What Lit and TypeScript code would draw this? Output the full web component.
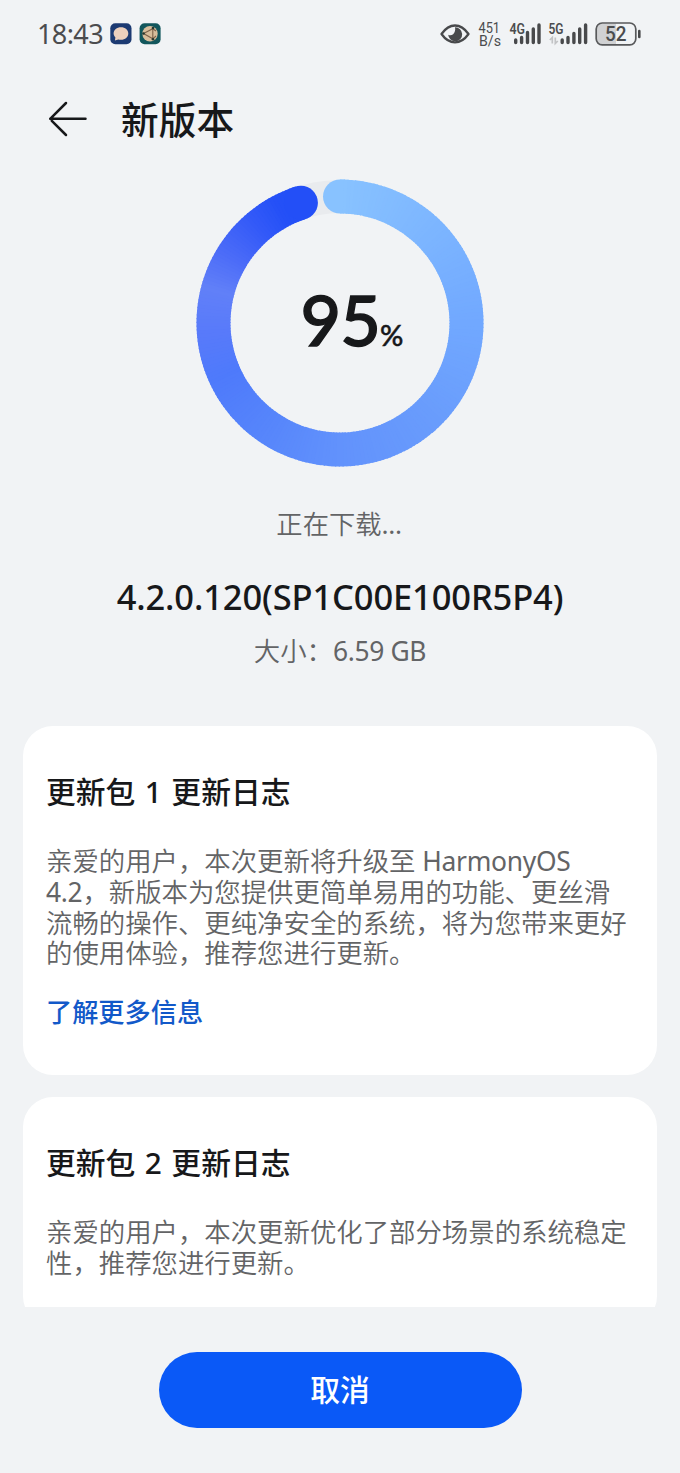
import { LitElement, html, svg, css } from "lit";
import { customElement, property } from "lit/decorators.js";

type Stop = [number, number, number, number];

const STOPS: Stop[] = [
  [0, 136, 194, 255],
  [45, 124, 181, 255],
  [90, 113, 168, 255],
  [135, 105, 156, 252],
  [180, 98, 146, 252],
  [215, 86, 133, 251],
  [245, 78, 122, 251],
  [265, 88, 122, 250],
  [284, 97, 128, 248],
  [300, 76, 108, 248],
  [318, 52, 90, 248],
  [332, 36, 80, 247],
  [360, 34, 78, 247],
];

function colorAt(deg: number): string {
  let i = 1;
  while (i < STOPS.length - 1 && STOPS[i][0] < deg) i++;
  const a = STOPS[i - 1];
  const b = STOPS[i];
  const t = Math.max(0, Math.min(1, (deg - a[0]) / (b[0] - a[0])));
  const mix = (k: number) => Math.round(a[k] + (b[k] - a[k]) * t);
  return `rgb(${mix(1)},${mix(2)},${mix(3)})`;
}

@customElement("progress-ring")
export class ProgressRing extends LitElement {
  @property({ type: Number }) value = 0;

  static styles = css`
    :host { display: grid; width: 288px; height: 288px; }
    svg, .label { grid-area: 1 / 1; }
    .label {
      display: flex; align-items: baseline; justify-content: center;
      padding: 102px 0 0 24px; color: #17181a; line-height: 76px;
      white-space: nowrap;
    }
    .num { font: 500 70px/76px "Lato", "Noto Sans", sans-serif; letter-spacing: -.8px; -webkit-text-stroke: 1.4px #17181a; }
    .pct { font: 500 29px/30px "Lato", "Noto Sans", sans-serif; -webkit-text-stroke: .5px #17181a; }
  `;

  private point(deg: number): string {
    const a = (deg * Math.PI) / 180;
    return `${(144 + 126.5 * Math.sin(a)).toFixed(3)} ${(144 - 126.5 * Math.cos(a)).toFixed(3)}`;
  }

  render() {
    const end = this.value * 3.6;
    const parts = [];
    for (let d = 0; d < end; d += 1.5) {
      const to = Math.min(d + 2, end);
      parts.push(svg`<path d="M${this.point(d)}A126.5 126.5 0 0 1 ${this.point(to)}" stroke=${colorAt(d)} stroke-width="34" fill="none"/>`);
    }
    const [ex, ey] = this.point(end).split(" ");
    return html`
      <svg width="288" height="288" viewBox="0 0 288 288">
        <circle cx="144" cy="144" r="126.5" fill="none" stroke="#e9ebee" stroke-width="33"/>
        <circle cx="144" cy="17.5" r="17" fill=${colorAt(0)}/>
        ${parts}
        <circle cx=${ex} cy=${ey} r="17" fill=${colorAt(end)}/>
      </svg>
      <div class="label"><span class="num">${this.value}</span><span class="pct">%</span></div>
    `;
  }
}

@customElement("status-bar")
export class StatusBar extends LitElement {
  static styles = css`
    :host { display: flex; height: 68px; box-sizing: border-box; padding: 0 38px 0 37px;
      align-items: center; justify-content: space-between; color: #4b4c4e; }
    .left, .right { display: flex; align-items: center; }
    .time { font: 400 27px/34px "Noto Sans", sans-serif; letter-spacing: -.6px; width: 73px; white-space: nowrap; }
    .app { margin-right: 7px; }
    svg { display: block; }
    text { font-family: "Roboto", sans-serif; fill: #4b4c4e; }
  `;

  render() {
    return html`
      <div class="left">
        <span class="time">18:43</span>
        <svg class="app" width="22" height="22" viewBox="0 0 22 22">
          <rect x=".3" y=".3" width="21.2" height="21" rx="5" fill="#1c3a72"/>
          <path d="M11 4.2c4.200 0 7.300 2.700 7.300 6.300s-3.100 6.300-7.300 6.300c-1 0-1.900-.1-2.700-.4l-3.400 1.200.5-3.200C4.300 13.300 3.600 12 3.600 10.500c0-3.600 3.200-6.300 7.400-6.300z" fill="#ecd0bd"/>
        </svg>
        <svg class="app" width="22" height="22" viewBox="0 0 22 22">
          <rect x=".6" y=".3" width="21" height="21" rx="5" fill="#12565c"/>
          <circle cx="11" cy="10.700" r="7.700" fill="#d8bd9b"/>
          <path d="M4.500 10.500L13.800 5.700V15.800L4.500 10.500M13.800 5.700L17 8M13.800 15.800L17 13" fill="none" stroke="#7d6149" stroke-width="1.100"/>
          <circle cx="4.500" cy="10.500" r="1.300" fill="#26372f"/><circle cx="14" cy="5" r="1.300" fill="#26372f"/><circle cx="14" cy="16.200" r="1.300" fill="#26372f"/>
        </svg>
      </div>
      <svg class="right" width="202" height="34" viewBox="0 0 202 34">
        <path d="M1.500 17C5.500 11.300 10 8.500 15 8.500S24.500 11.300 28.500 17C24.500 22.700 20 25.300 15 25.300S5.500 22.700 1.500 17z" fill="none" stroke="#48494b" stroke-width="2.300" stroke-linejoin="round"/>
        <path d="M15 10.300a7 7 0 1 1-6.800 7.500c1.600.9 3.600.6 4.900-.6 1.900-1.700 2.500-4.400 1.900-6.900z" fill="#48494b"/>
        <text x="38.500" y="15.600" font-size="14" textLength="21.500" lengthAdjust="spacingAndGlyphs">451</text>
        <text x="39" y="29.200" font-size="14" textLength="22" lengthAdjust="spacingAndGlyphs">B/s</text>
        <text x="69.500" y="16.500" font-size="14" font-weight="600" textLength="15.500" lengthAdjust="spacingAndGlyphs">4G</text>
        <g stroke="#48494b" stroke-width="3.400" stroke-linecap="round">
          <path d="M75.700 22.900V25.500M81.600 20.500V25.500M87.500 15.500V25.500M93.300 12V25.500M99 8V25.500"/>
          <path d="M122.200 22.900V25.500M128 20.500V25.500M133.900 16.500V25.500M139.700 12V25.500M145.600 8V25.500"/>
        </g>
        <text x="108.500" y="16.500" font-size="14" font-weight="600" textLength="15" lengthAdjust="spacingAndGlyphs">5G</text>
        <path d="M112.300 26.500V20.500L109.800 23M115.300 20.500V26.500L117.800 24" fill="none" stroke="#c2c3c5" stroke-width="1.700"/>
        <path d="M162 6.800H176V27.200H162Q156.500 27.200 156.500 21.500V12.500Q156.500 6.800 162 6.800z" fill="#d0d1d3"/>
        <rect x="156.200" y="6" width="39.600" height="21.800" rx="6" fill="none" stroke="#58595b" stroke-width="1.700"/>
        <path d="M199.300 14V20" stroke="#48494b" stroke-width="2.600" stroke-linecap="round"/>
        <text x="165" y="24" font-size="20" font-weight="500" textLength="21.500" lengthAdjust="spacingAndGlyphs">52</text>
      </svg>
    `;
  }
}

@customElement("log-card")
export class LogCard extends LitElement {
  @property() heading = "";
  @property() body = "";
  @property() link = "";

  static styles = css`
    :host { display: flex; flex-direction: column; flex: none; background: #fff; border-radius: 30px;
      padding: 45px 23px 0; box-sizing: border-box; }
    h2 { margin: 0; font-size: 29.8px; line-height: 42px; font-weight: 500; word-spacing: 1.700px; color: #17181a; white-space: nowrap; }
    p { margin: 33px 0 0; font-size: 26.4px; line-height: 30.8px; font-weight: 350; color: #636466; white-space: pre; }
    .latin { font-weight: 400; letter-spacing: -.3px; }
    a { margin-top: 25px; font-size: 26.200px; line-height: 36px; font-weight: 500; color: #1259c9; }
  `;

  render() {
    const runs = this.body
      .split(/([A-Za-z0-9.]+)/)
      .map((run, i) => (i % 2 ? html`<span class="latin">${run}</span>` : run));
    return html`<h2>${this.heading}</h2><p>${runs}</p>${this.link ? html`<a>${this.link}</a>` : ""}`;
  }
}

@customElement("app-root")
export class AppRoot extends LitElement {
  static styles = css`
    :host { display: flex; flex-direction: column; width: 680px; height: 1473px; overflow: hidden;
      background: #f1f3f5; font-family: "Noto Sans", "Noto Sans CJK SC", sans-serif; color: #17181a; }
    header { display: flex; align-items: center; height: 102px; padding-left: 48px; gap: 34px; }
    header svg { display: block; }
    h1 { margin: 0; padding-top: 1px; font-size: 37.7px; font-weight: 500; line-height: 52px; }
    .summary { display: flex; flex-direction: column; align-items: center; padding-top: 9px; height: 548px; box-sizing: border-box; }
    .state { margin-top: 39px; padding-right: 2px; font-size: 26.300px; line-height: 36px; font-weight: 350; color: #636466; }
    .version { margin-top: 31px; font-size: 34.500px; line-height: 48px; font-weight: 500; letter-spacing: -.13px; }
    .size { margin-top: 12px; font-size: 26.400px; line-height: 36px; font-weight: 350; color: #636466; white-space: pre; }
    .latin { font-weight: 400; letter-spacing: -.35px; }
    .list { display: flex; flex-direction: column; gap: 22px; padding: 8px 23px 0; height: 589px; box-sizing: border-box; overflow: hidden; }
    .first { height: 349px; }
    .second { height: 229px; }
    footer { display: flex; justify-content: center; padding-top: 45px; }
    button { width: 363px; height: 76px; border: 0; border-radius: 38px; background: #0a59f7; color: #fff;
      font: 500 29.800px/42px "Noto Sans CJK SC", sans-serif; padding: 0 0 4px; }
  `;

  render() {
    return html`
      <status-bar></status-bar>
      <header>
        <svg width="39" height="38" viewBox="0 0 39 38">
          <path d="M18 3L2.200 18.800M3.800 20.800L18 35M2.200 18.800H37.500" fill="none" stroke="#17181a" stroke-width="2.500" stroke-linecap="round" stroke-linejoin="round"/>
        </svg>
        <h1>新版本</h1>
      </header>
      <section class="summary">
        <progress-ring .value=${95}></progress-ring>
        <div class="state">正在下载<span class="latin">...</span></div>
        <div class="version">4.2.0.120(SP1C00E100R5P4)</div>
        <div class="size">大小：<span class="latin">6.59 GB</span></div>
      </section>
      <section class="list">
        <log-card class="first" .heading=${"更新包 1 更新日志"}
          .body=${"亲爱的用户，本次更新将升级至 HarmonyOS\n4.2，新版本为您提供更简单易用的功能、更丝滑\n流畅的操作、更纯净安全的系统，将为您带来更好\n的使用体验，推荐您进行更新。"}
          .link=${"了解更多信息"}></log-card>
        <log-card class="second" .heading=${"更新包 2 更新日志"}
          .body=${"亲爱的用户，本次更新优化了部分场景的系统稳定\n性，推荐您进行更新。"}></log-card>
      </section>
      <footer><button>取消</button></footer>
    `;
  }
}
